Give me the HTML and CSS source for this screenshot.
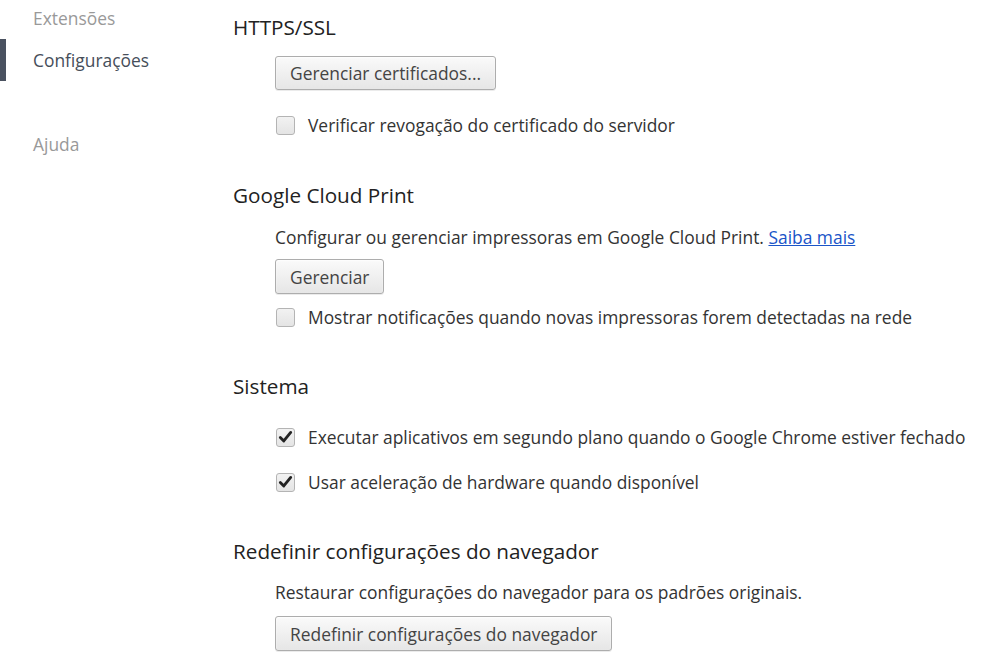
FILE: index.html
```html
<!DOCTYPE html>
<html lang="pt-BR">
<head>
<meta charset="utf-8">
<title>Configurações</title>
<link rel="stylesheet" href="styles.css">
</head>
<body>
<div class="page">
  <nav class="sidebar">
    <div class="nav-item first">Extensões</div>
    <div class="nav-item active">Configurações</div>
    <div class="nav-item help">Ajuda</div>
  </nav>
  <main class="main">
    <section class="sec s1">
      <h3 class="title">HTTPS/SSL</h3>
      <div class="indent">
        <button class="btn b1">Gerenciar certificados...</button>
        <label class="check c1"><span class="box"></span><span>Verificar revogação do certificado do servidor</span></label>
      </div>
    </section>
    <section class="sec s2">
      <h3 class="title">Google Cloud Print</h3>
      <div class="indent">
        <p class="text t2">Configurar ou gerenciar impressoras em Google Cloud Print. <a href="#" class="link">Saiba mais</a></p>
        <button class="btn b2">Gerenciar</button>
        <label class="check c2"><span class="box"></span><span>Mostrar notificações quando novas impressoras forem detectadas na rede</span></label>
      </div>
    </section>
    <section class="sec s3">
      <h3 class="title">Sistema</h3>
      <div class="indent">
        <label class="check c3"><span class="box checked"><svg viewBox="0 0 18 18" width="18" height="18"><path d="M3.5 9.5 L7.2 13.2 L14.5 4.2" fill="none" stroke="#222" stroke-width="3" stroke-linecap="round" stroke-linejoin="round"/></svg></span><span>Executar aplicativos em segundo plano quando o Google Chrome estiver fechado</span></label>
        <label class="check c4"><span class="box checked"><svg viewBox="0 0 18 18" width="18" height="18"><path d="M3.5 9.5 L7.2 13.2 L14.5 4.2" fill="none" stroke="#222" stroke-width="3" stroke-linecap="round" stroke-linejoin="round"/></svg></span><span>Usar aceleração de hardware quando disponível</span></label>
      </div>
    </section>
    <section class="sec s4">
      <h3 class="title">Redefinir configurações do navegador</h3>
      <div class="indent">
        <p class="text t4">Restaurar configurações do navegador para os padrões originais.</p>
        <button class="btn b4">Redefinir configurações do navegador</button>
      </div>
    </section>
  </main>
</div>
</body>
</html>
```

FILE: styles.css
```css
* { box-sizing: border-box; }
html, body { margin: 0; padding: 0; background: #fff; }
body {
  font-family: "Open Sans", "Noto Sans", "DejaVu Sans", sans-serif;
  font-size: 17.4px;
  color: #333;
  width: 984px;
  height: 667px;
  overflow: hidden;
}
.page { display: flex; }
.sidebar { width: 233px; flex: none; }
.nav-item {
  height: 42px;
  line-height: 42px;
  font-size: 17.4px;
  color: #999;
  border-left: 6px solid transparent;
  padding-left: 27px;
  white-space: nowrap;
}
.nav-item.first { margin-top: -3px; }
.nav-item.active {
  color: #464e5a;
  border-left-color: #4a5260;
}
.nav-item.help { margin-top: 42px; }

.main { flex: 1; }
.title {
  margin: 0;
  font-size: 20.7px;
  font-weight: normal;
  line-height: 28px;
  color: #222;
}
.indent { padding-left: 42px; display: flex; flex-direction: column; align-items: flex-start; }
.s1 { padding-top: 13px; }
.s2 { margin-top: 42px; }
.s3 { margin-top: 41px; }
.s4 { margin-top: 41px; }

.btn {
  font-family: inherit;
  font-size: 17.4px;
  color: #444;
  height: 34px;
  padding: 0 14px;
  border: 1px solid #adadad;
  border-radius: 3px;
  background: linear-gradient(#fafafa, #e6e6e6);
  box-shadow: 0 1px 0 rgba(0,0,0,0.08), inset 0 1px 2px rgba(255,255,255,0.8);
  white-space: nowrap;
}
.b1 { margin-top: 15px; }
.b2 { margin-top: 8px; height: 35px; }
.b4 { margin-top: 10px; height: 35px; }

.text { margin: 0; line-height: 28px; color: #333; white-space: nowrap; }
.t2 { margin-top: 14px; }
.t4 { margin-top: 13px; }
.link { color: #1a55c8; text-decoration: underline; }

.check {
  display: flex;
  align-items: center;
  height: 28px;
  line-height: 28px;
  color: #333;
  white-space: nowrap;
}
.c1 { margin-top: 21px; }
.c2 { margin-top: 9px; }
.c3 { margin-top: 23px; }
.c4 { margin-top: 17px; }
.box {
  width: 19px;
  height: 19px;
  margin-left: 1px;
  margin-right: 13px;
  border: 1px solid #b4b4b4;
  border-radius: 3px;
  background: linear-gradient(#f2f2f2, #e4e4e4);
  display: flex;
  align-items: center;
  justify-content: center;
  flex: none;
}
.box svg { display: block; }
```
